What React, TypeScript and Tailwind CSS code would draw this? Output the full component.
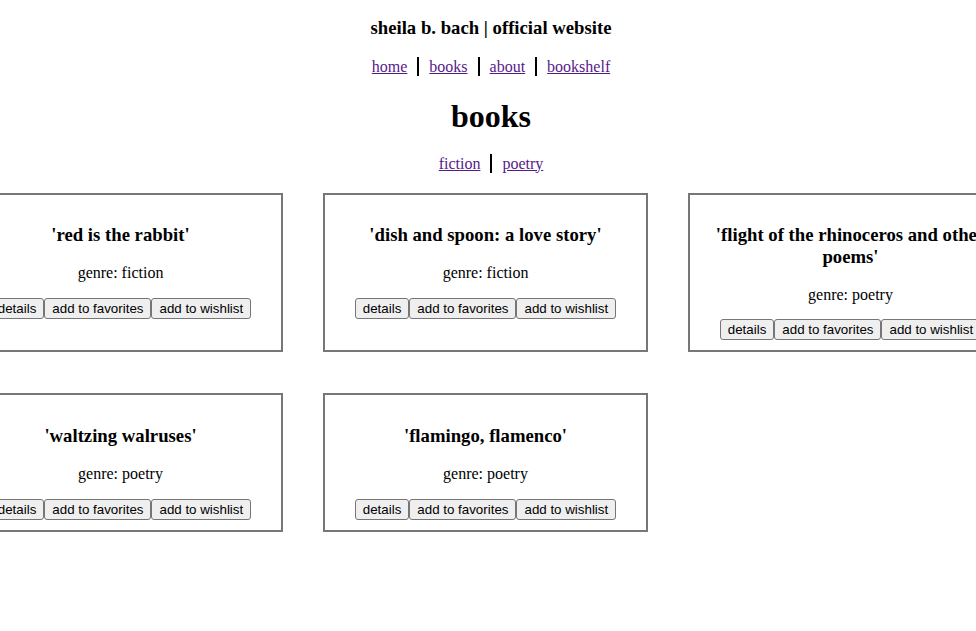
import React from 'react'

const books = [
  { title: "'red is the rabbit'", genre: 'fiction' },
  { title: "'dish and spoon: a love story'", genre: 'fiction' },
  { title: "'flight of the rhinoceros and other poems'", genre: 'poetry' },
  { title: "'waltzing walruses'", genre: 'poetry' },
  { title: "'flamingo, flamenco'", genre: 'poetry' },
]

function NavLinks({ links }: { links: string[] }) {
  return (
    <ul className="flex justify-center items-center">
      {links.map((l, i) => (
        <li
          key={l}
          className={`px-[10px] leading-[19px] ${i > 0 ? 'border-l-2 border-black' : ''}`}
        >
          <a href="#" className="text-[#551a8b] underline">{l}</a>
        </li>
      ))}
    </ul>
  )
}

function Btn({ children }: { children: React.ReactNode }) {
  return (
    <button className="bg-[#efefef] border border-[#767676] rounded-[3px] px-[7px] py-[1px] text-[13.33px] leading-[17px] font-['Liberation_Sans',Arial,sans-serif] text-black">
      {children}
    </button>
  )
}

function BookCard({ title, genre }: { title: string; genre: string }) {
  return (
    <div className="border-2 border-[#777] p-[10px] text-center">
      <h3 className="mt-[19.7px] text-[18.72px] leading-[21.5px] font-bold">{title}</h3>
      <p className="mt-[18.7px] text-[16px] leading-[18.4px]">genre: {genre}</p>
      <div className="mt-[15px] flex justify-center">
        <Btn>details</Btn>
        <Btn>add to favorites</Btn>
        <Btn>add to wishlist</Btn>
      </div>
    </div>
  )
}

export default function App() {
  return (
    <div className="w-full min-h-[631px] bg-white text-black font-['Liberation_Serif','Times_New_Roman',serif] overflow-hidden pb-10">
      <div className="pl-[6px]">
        <header className="text-center pt-[17px]">
          <p className="text-[18.72px] leading-[21.5px] font-bold">sheila b. bach | official website</p>
          <nav className="mt-[18px] text-[16px]">
            <NavLinks links={['home', 'books', 'about', 'bookshelf']} />
          </nav>
        </header>

        <h1 className="mt-[22px] text-center text-[32px] leading-[37px] font-bold">books</h1>

        <nav className="mt-[19px] text-[16px]">
          <NavLinks links={['fiction', 'poetry']} />
        </nav>
      </div>

      <div className="mt-[20px] flex justify-center pr-[5px]">
        <div className="grid grid-cols-[325px_325px_325px] gap-x-[40px] gap-y-[41px] shrink-0">
          {books.map(b => <BookCard key={b.title} {...b} />)}
        </div>
      </div>
    </div>
  )
}
